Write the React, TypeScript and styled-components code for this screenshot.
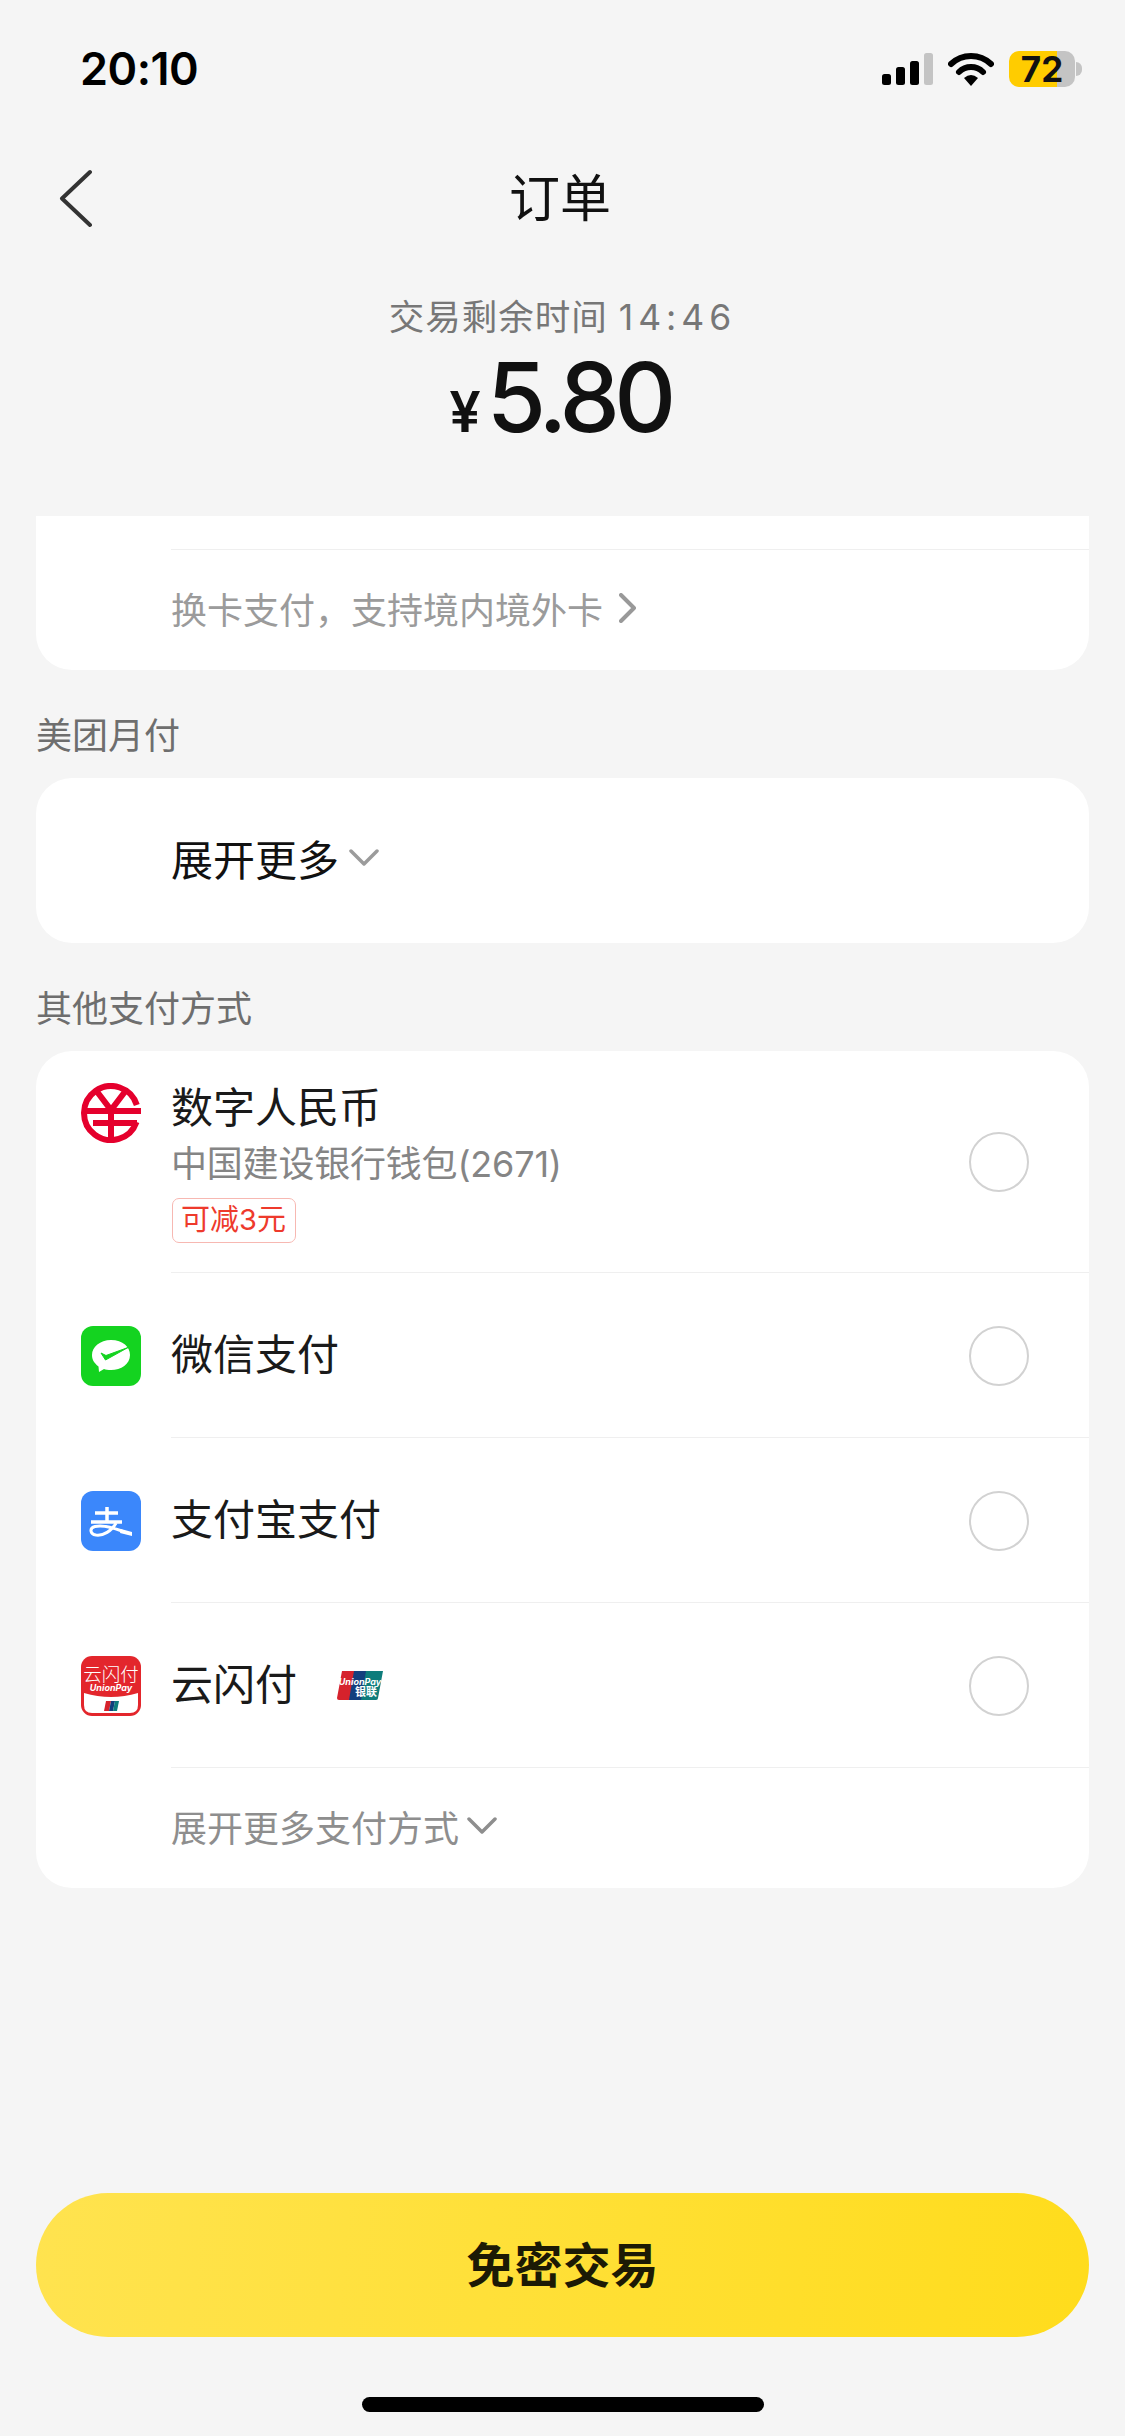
import React from "react";
import styled, { createGlobalStyle } from "styled-components";

const Global = createGlobalStyle`
  html, body { margin: 0; padding: 0; background: #f5f5f5; }
  * { box-sizing: border-box; }
`;
const cjk = `"Inter", "Noto Sans CJK SC", sans-serif`;

const Page = styled.div`
  width: 1125px; height: 2436px; background: #f5f5f5; font-family: ${cjk};
  display: flex; flex-direction: column; overflow: hidden;
`;
const StatusBar = styled.div`
  height: 154px; flex: none; padding: 44px 43px 0 80px;
  display: flex; justify-content: space-between; align-items: flex-start;
`;
const Time = styled.div`font-size: 45px; line-height: 50px; font-weight: 600; color: #000; letter-spacing: -0.5px;`;
const StatusIcons = styled.div`display: flex; align-items: center; gap: 15px; margin-top: 7px;`;
const Battery = styled.div`
  width: 66px; height: 36px; border-radius: 10px; position: relative;
  display: flex; align-items: center; justify-content: center;
  background: linear-gradient(90deg, #ffcc00 0 48px, #c4c4c4 48px);
  font: 700 35px/36px "Inter", sans-serif; color: #111; margin-right: 7px;
  &::after {
    content: ""; position: absolute; right: -7px; top: 11px; width: 6px; height: 14px;
    border-radius: 0 7px 7px 0; background: #c4c4c4;
  }
`;
const NavBar = styled.div`
  height: 90px; flex: none; position: relative; padding-right: 5px;
  display: flex; align-items: center; justify-content: center;
`;
const BackIcon = styled.svg`position: absolute; left: 58px; top: 15px;`;
const NavTitle = styled.div`font-size: 51px; line-height: 60px; color: #111;`;
const Summary = styled.div`
  flex: none; height: 272px; padding-top: 49px; display: flex; flex-direction: column; align-items: center;
`;
const Timer = styled.div`font-size: 35.5px; line-height: 50px; color: #777; letter-spacing: 1px;`;
const Digits = styled.span`letter-spacing: 5px;`;
const Amount = styled.div`display: flex; align-items: baseline; gap: 6px; margin-top: 9px; padding-right: 5px; color: #111;`;
const Currency = styled.span`font-size: 56px; line-height: 90px; font-weight: 600;`;
const Value = styled.span`font-size: 96px; line-height: 90px; font-weight: 500; letter-spacing: -5.5px;`;
const Content = styled.div`flex: 1; padding: 0 36px; display: flex; flex-direction: column;`;
const Card = styled.div<{ $clipped?: boolean }>`
  background: #fff; overflow: hidden;
  border-radius: ${p => (p.$clipped ? "0 0 36px 36px" : "36px")};
`;
const ClipTop = styled.div`height: 33px;`;
const Divider = styled.div`height: 1px; margin-left: 135px; background: #efefef;`;
const ChangeCard = styled.div`
  height: 120px; padding: 0 0 4px 135px; display: flex; align-items: center; gap: 16px;
  font-size: 36px; color: #9b9b9b;
`;
const SectionLabel = styled.div`height: 108px; display: flex; align-items: center; font-size: 36px; color: #6e6e6e; padding-top: 18px;`;
const ExpandRow = styled.div`
  height: 165px; padding: 0 0 6px 135px; display: flex; align-items: center; gap: 10px;
  font-size: 42px; color: #111;
`;
const Row = styled.div<{ $tall?: boolean }>`
  height: ${p => (p.$tall ? 221 : 164)}px; padding: 0 60px 0 45px; display: flex; align-items: ${p => (p.$tall ? "flex-start" : "center")};
`;
const IconSlot = styled.div<{ $tall?: boolean }>`
  width: 60px; height: 60px; flex: none; margin-right: 30px; margin-top: ${p => (p.$tall ? 32 : 2)}px;
`;
const RowBody = styled.div<{ $tall?: boolean }>`
  flex: 1; display: flex; flex-direction: column; padding-top: ${p => (p.$tall ? 30 : 0)}px;
`;
const RowTitle = styled.div`font-size: 42px; line-height: 54px; color: #1a1a1a; display: flex; align-items: center; gap: 40px;`;
const RowSub = styled.div`font-size: 36px; line-height: 52px; color: #858585; margin-top: 3px; letter-spacing: -0.2px;`;
const Tag = styled.div`
  align-self: flex-start; height: 45px; padding: 0 9px 0 8px; margin: 8px 0 0 1px;
  border: 1.5px solid #f7b8b2; border-radius: 7px; color: #ee3a2c;
  font-size: 29px; line-height: 42px;
`;
const Radio = styled.div`
  width: 60px; height: 60px; flex: none; margin-top: 2px; border-radius: 50%; border: 2px solid #d2d2d2;
`;
const TallRadio = styled(Radio)`margin-top: 81px;`;
const MoreRow = styled.div`
  height: 120px; padding: 0 0 4px 135px; display: flex; align-items: center; gap: 8px;
  font-size: 36px; color: #8e8e8e;
`;
const Footer = styled.div`flex: none; padding: 0 36px; display: flex; flex-direction: column; align-items: center;`;
const PayButton = styled.div`
  width: 1053px; height: 144px; padding-bottom: 6px; border-radius: 72px;
  background: linear-gradient(95deg, #ffe34f 0%, #ffdc1c 100%);
  display: flex; align-items: center; justify-content: center;
  font-size: 48px; font-weight: 700; color: #1c1a05;
`;
const HomeBar = styled.div`width: 402px; height: 15px; border-radius: 8px; background: #000; margin: 60px 0 24px;`;

const Signal = () => (
  <svg width="51" height="32" viewBox="0 0 51 32">
    <rect x="0" y="21" width="9" height="11" rx="2.5" fill="#000" />
    <rect x="14" y="14" width="9" height="18" rx="2.5" fill="#000" />
    <rect x="28" y="8" width="9" height="24" rx="2.5" fill="#000" />
    <rect x="42" y="0" width="9" height="32" rx="2.5" fill="#c4c4c4" />
  </svg>
);
const Wifi = () => (
  <svg width="46" height="34" viewBox="0 0 46 34">
    <path d="M3 12 A29 29 0 0 1 43 12" fill="none" stroke="#000" strokeWidth="6" strokeLinecap="round" />
    <path d="M11 20 A17 17 0 0 1 35 20" fill="none" stroke="#000" strokeWidth="6" strokeLinecap="round" />
    <path d="M16 26 Q23 20 30 26 L23 34 Z" fill="#000" />
  </svg>
);
const Chevron = ({ dir, w, h, color, sw = 3.5 }: { dir: "right" | "down"; w: number; h: number; color: string; sw?: number }) => (
  <svg width={w} height={h} viewBox={`0 0 ${w} ${h}`}>
    <path
      d={dir === "right" ? `M2 2 L${w - 3} ${h / 2} L2 ${h - 2}` : `M2 2 L${w / 2} ${h - 3} L${w - 2} 2`}
      fill="none" stroke={color} strokeWidth={sw} strokeLinecap="round" strokeLinejoin="round"
    />
  </svg>
);
const YuanIcon = () => (
  <svg width="60" height="60" viewBox="0 0 60 60">
    <path d="M55.500 39 A27 27 0 1 1 55.800 22" fill="none" stroke="#e5002d" strokeWidth="6" />
    <path d="M14 6 L30 27 L46 6" fill="none" stroke="#e5002d" strokeWidth="6" />
    <path d="M3 28 H60 M12 40 H56" fill="none" stroke="#e5002d" strokeWidth="6" />
    <path d="M30 27 V57" fill="none" stroke="#e5002d" strokeWidth="6" />
  </svg>
);
const WechatIcon = () => (
  <svg width="60" height="60" viewBox="0 0 60 60">
    <rect width="60" height="60" rx="12" fill="#14d320" />
    <path d="M30 14 C42 14 49 21 49 29 C49 38 40 44 30 44 C27 44 24.5 43.6 23 43 L18 46 L17.500 40.500 C13 37 11 33.500 11 29 C11 21 19 14 30 14 Z" fill="#fff" />
    <path d="M20 27 L24.500 34 L47 21.500 L25 29.500 L20 27 Z" fill="#14d320" stroke="#14d320" strokeWidth="1" strokeLinejoin="round" />
  </svg>
);
const AlipayIcon = () => (
  <svg width="60" height="60" viewBox="0 0 60 60">
    <rect width="60" height="60" rx="12" fill="#3b87fb" />
    <path d="M14 22 H37 M10 31 H41 M26 16 V31" fill="none" stroke="#fff" strokeWidth="3.500" />
    <path d="M35 32 C31 40 22 45 15 44 C9 43 8 37 14 35.500 C22 33.500 33 37 41 40" fill="none" stroke="#fff" strokeWidth="3" />
    <path d="M40 38 L51 41 V45 L39 42 Z" fill="#fff" />
  </svg>
);
const CloudPayIcon = () => (
  <svg width="60" height="60" viewBox="0 0 60 60">
    <rect width="60" height="60" rx="11" fill="#e3262c" />
    <path d="M3 37 Q30 45 57 37 V49 Q57 57 49 57 H11 Q3 57 3 49 Z" fill="#fff" />
    <text x="30" y="25" textAnchor="middle" fontSize="18.500" fill="#fff" fontWeight="300" fontFamily="Noto Sans CJK SC, sans-serif">云闪付</text>
    <text x="30" y="35" textAnchor="middle" fontSize="9" fontStyle="italic" fontWeight="700" fill="#fff" fontFamily="Inter, sans-serif">UnionPay</text>
    <path d="M25 45 H30 L28 55 H23 Z" fill="#d6222c" />
    <path d="M30 45 H34 L32 55 H28 Z" fill="#123f7c" />
    <path d="M34 45 H38 L36 55 H32 Z" fill="#0f7d7c" />
  </svg>
);
const UnionPayLogo = () => (
  <svg width="46" height="29" viewBox="0 0 46 29">
    <path d="M5 0 H19 L14 29 H2 Q0 29 0 27 Z" fill="#d6222c" />
    <path d="M17 0 H31 L26 29 H12 Z" fill="#143f7e" />
    <path d="M29 0 H46 L41 27 Q41 29 39 29 H24 Z" fill="#0e7c7b" />
    <text x="23" y="14" textAnchor="middle" fontSize="9" fontStyle="italic" fontWeight="700" fill="#fff" fontFamily="Inter, sans-serif">UnionPay</text>
    <text x="29" y="25" textAnchor="middle" fontSize="11" fontWeight="700" fill="#fff" fontFamily="Noto Sans CJK SC, sans-serif">银联</text>
  </svg>
);

export default function App() {
  return (
    <Page>
      <Global />
      <StatusBar>
        <Time>20:10</Time>
        <StatusIcons>
          <Signal />
          <Wifi />
          <Battery>72</Battery>
        </StatusIcons>
      </StatusBar>
      <NavBar>
        <BackIcon width="34" height="60" viewBox="0 0 34 60">
          <path d="M32 3 L4 29.500 L32 56" fill="none" stroke="#333" strokeWidth="4" strokeLinecap="round" strokeLinejoin="round" />
        </BackIcon>
        <NavTitle>订单</NavTitle>
      </NavBar>
      <Summary>
        <Timer>交易剩余时间 <Digits>14:46</Digits></Timer>
        <Amount>
          <Currency>¥</Currency>
          <Value>5.80</Value>
        </Amount>
      </Summary>
      <Content>
        <Card $clipped>
          <ClipTop />
          <Divider />
          <ChangeCard>
            换卡支付，支持境内境外卡
            <Chevron dir="right" w={18} h={30} color="#999" sw={4} />
          </ChangeCard>
        </Card>
        <SectionLabel>美团月付</SectionLabel>
        <Card>
          <ExpandRow>
            展开更多
            <Chevron dir="down" w={30} h={18} color="#9b9b9b" sw={3.5} />
          </ExpandRow>
        </Card>
        <SectionLabel>其他支付方式</SectionLabel>
        <Card>
          <Row $tall>
            <IconSlot $tall><YuanIcon /></IconSlot>
            <RowBody $tall>
              <RowTitle>数字人民币</RowTitle>
              <RowSub>中国建设银行钱包(2671)</RowSub>
              <Tag>可减3元</Tag>
            </RowBody>
            <TallRadio />
          </Row>
          <Divider />
          <Row>
            <IconSlot><WechatIcon /></IconSlot>
            <RowBody><RowTitle>微信支付</RowTitle></RowBody>
            <Radio />
          </Row>
          <Divider />
          <Row>
            <IconSlot><AlipayIcon /></IconSlot>
            <RowBody><RowTitle>支付宝支付</RowTitle></RowBody>
            <Radio />
          </Row>
          <Divider />
          <Row>
            <IconSlot><CloudPayIcon /></IconSlot>
            <RowBody><RowTitle>云闪付<UnionPayLogo /></RowTitle></RowBody>
            <Radio />
          </Row>
          <Divider />
          <MoreRow>
            展开更多支付方式
            <Chevron dir="down" w={30} h={18} color="#8e8e8e" sw={3.5} />
          </MoreRow>
        </Card>
      </Content>
      <Footer>
        <PayButton>免密交易</PayButton>
        <HomeBar />
      </Footer>
    </Page>
  );
}
